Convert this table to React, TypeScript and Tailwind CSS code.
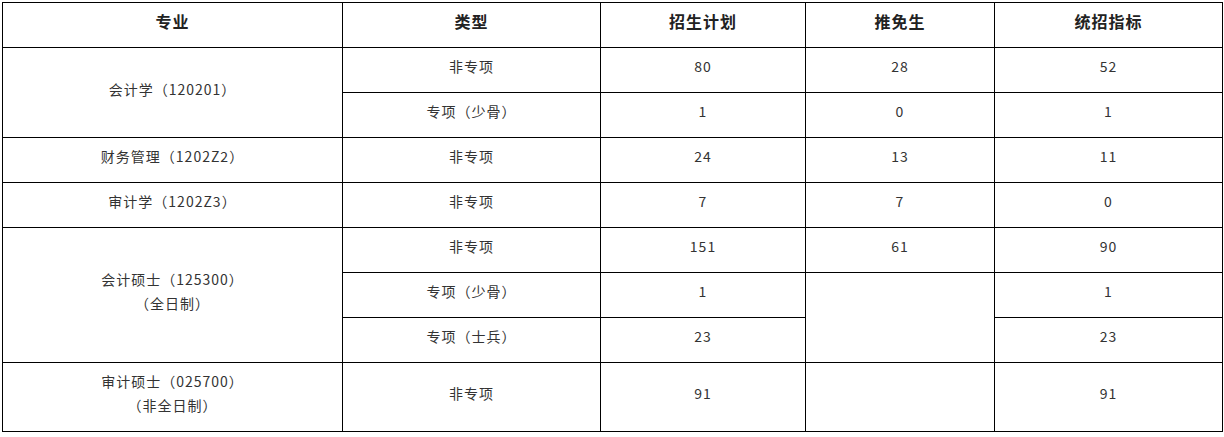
import React from "react";

const font = { fontFamily: '"Noto Sans CJK SC", "Noto Sans", sans-serif' };

function Td({
  children,
  rowSpan,
}: {
  children?: React.ReactNode;
  rowSpan?: number;
}) {
  return (
    <td
      rowSpan={rowSpan}
      className="border border-black text-center align-middle p-0 pb-[8px] text-[14px] leading-[24px] tracking-[1px] text-[#333]"
    >
      {children}
    </td>
  );
}

function Th({ children }: { children: React.ReactNode }) {
  return (
    <th className="border border-black text-center align-middle p-0 pb-[8px] text-[16px] leading-[24px] tracking-[1px] font-bold text-[#222]">
      {children}
    </th>
  );
}

export default function App() {
  return (
    <div className="bg-white w-[1224px] h-[437px] overflow-hidden pl-[2px] pt-[2px]" style={font}>
      <table className="table-fixed border-collapse w-[1220px]">
        <colgroup>
          <col className="w-[340px]" />
          <col className="w-[258px]" />
          <col className="w-[205px]" />
          <col className="w-[189px]" />
          <col className="w-[228px]" />
        </colgroup>
        <thead>
          <tr className="h-[45px]">
            <Th>专业</Th>
            <Th>类型</Th>
            <Th>招生计划</Th>
            <Th>推免生</Th>
            <Th>统招指标</Th>
          </tr>
        </thead>
        <tbody>
          <tr className="h-[45px]">
            <Td rowSpan={2}>会计学（120201）</Td>
            <Td>非专项</Td>
            <Td>80</Td>
            <Td>28</Td>
            <Td>52</Td>
          </tr>
          <tr className="h-[45px]">
            <Td>专项（少骨）</Td>
            <Td>1</Td>
            <Td>0</Td>
            <Td>1</Td>
          </tr>
          <tr className="h-[45px]">
            <Td>财务管理（1202Z2）</Td>
            <Td>非专项</Td>
            <Td>24</Td>
            <Td>13</Td>
            <Td>11</Td>
          </tr>
          <tr className="h-[45px]">
            <Td>审计学（1202Z3）</Td>
            <Td>非专项</Td>
            <Td>7</Td>
            <Td>7</Td>
            <Td>0</Td>
          </tr>
          <tr className="h-[45px]">
            <Td rowSpan={3}>
              会计硕士（125300）
              <br />
              （全日制）
            </Td>
            <Td>非专项</Td>
            <Td>151</Td>
            <Td>61</Td>
            <Td>90</Td>
          </tr>
          <tr className="h-[45px]">
            <Td>专项（少骨）</Td>
            <Td>1</Td>
            <Td rowSpan={2}></Td>
            <Td>1</Td>
          </tr>
          <tr className="h-[45px]">
            <Td>专项（士兵）</Td>
            <Td>23</Td>
            <Td>23</Td>
          </tr>
          <tr className="h-[69px]">
            <Td>
              审计硕士（025700）
              <br />
              （非全日制）
            </Td>
            <Td>非专项</Td>
            <Td>91</Td>
            <Td></Td>
            <Td>91</Td>
          </tr>
        </tbody>
      </table>
      <div className="pl-[64px] pt-[2px] text-[14px] leading-[20px] text-[#333]">
        注：<span className="text-[#c00000]">推免生</span>名额以最终确认为准
      </div>
    </div>
  );
}
